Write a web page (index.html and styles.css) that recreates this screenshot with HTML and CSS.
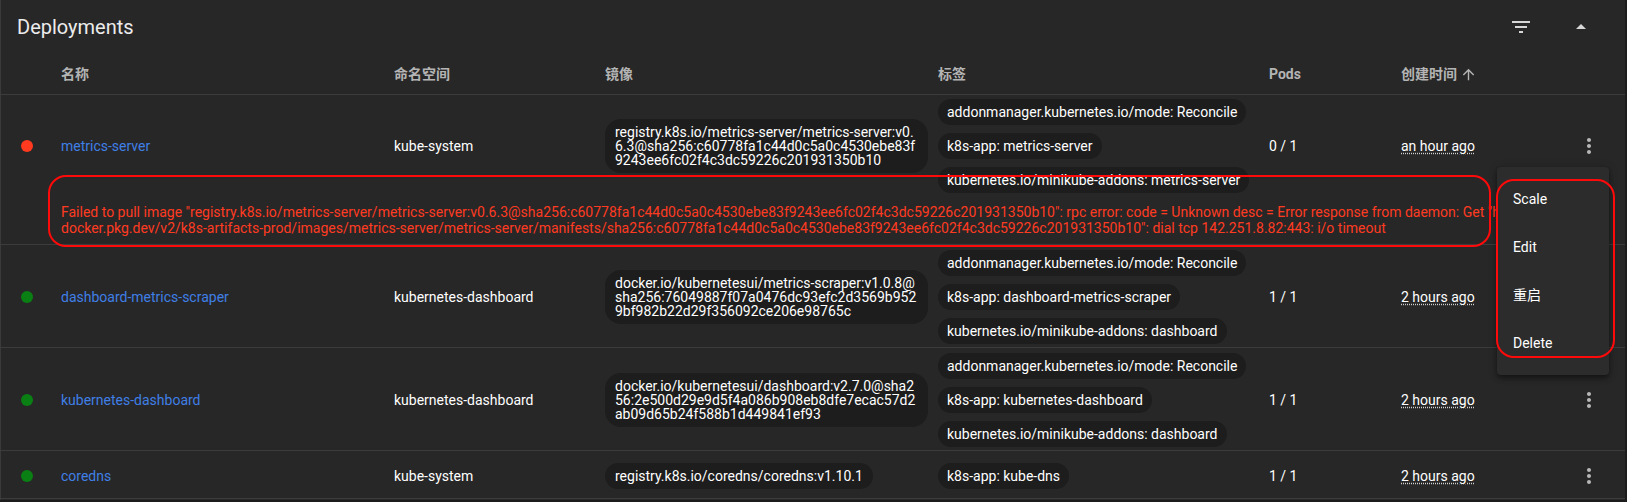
FILE: index.html
```html
<!DOCTYPE html>
<html lang="zh">
<head>
<meta charset="utf-8">
<title>Deployments</title>
<link rel="stylesheet" href="styles.css">
</head>
<body>
<div class="card">
  <div class="titlebar">
    <div class="title">Deployments</div>
    <div class="tools">
      <span class="tool"><svg class="icon" viewBox="0 0 24 24"><path d="M10 18h4v-2h-4v2zM3 6v2h18V6H3zm3 7h12v-2H6v2z"/></svg></span>
      <span class="tool"><svg class="icon" viewBox="0 0 24 24"><path d="M7 14l5-5 5 5z"/></svg></span>
    </div>
  </div>

  <div class="row head">
    <div></div>
    <div>名称</div>
    <div>命名空间</div>
    <div>镜像</div>
    <div>标签</div>
    <div>Pods</div>
    <div class="sort">创建时间<svg class="arrow" viewBox="0 0 24 24"><path d="M4 12l1.41 1.41L11 7.83V20h2V7.83l5.58 5.59L20 12l-8-8-8 8z"/></svg></div>
    <div></div>
  </div>

  <div class="group">
    <div class="row first">
      <div><span class="dot bad"></span></div>
      <div><a class="name">metrics-server</a></div>
      <div class="text">kube-system</div>
      <div><span class="chip img">registry.k8s.io/metrics-server/metrics-server:v0.6.3@sha256:c60778fa1c44d0c5a0c4530ebe83f9243ee6fc02f4c3dc59226c201931350b10</span></div>
      <div class="labels">
        <span class="chip">addonmanager.kubernetes.io/mode: Reconcile</span>
        <span class="chip">k8s-app: metrics-server</span>
        <span class="chip">kubernetes.io/minikube-addons: metrics-server</span>
      </div>
      <div class="text">0 / 1</div>
      <div><span class="age">an hour ago</span></div>
      <div><svg class="kebab" viewBox="0 0 24 24"><path d="M12 8c1.1 0 2-.9 2-2s-.9-2-2-2-2 .9-2 2 .9 2 2 2zm0 2c-1.1 0-2 .9-2 2s.9 2 2 2 2-.9 2-2-.9-2-2-2zm0 6c-1.1 0-2 .9-2 2s.9 2 2 2 2-.9 2-2-.9-2-2-2z"/></svg></div>
    </div>
    <div class="error">
      <div class="line">Failed to pull image "registry.k8s.io/metrics-server/metrics-server:v0.6.3@sha256:c60778fa1c44d0c5a0c4530ebe83f9243ee6fc02f4c3dc59226c201931350b10": rpc error: code = Unknown desc = Error response from daemon: Get "h</div>
      <div class="line">docker.pkg.dev/v2/k8s-artifacts-prod/images/metrics-server/metrics-server/manifests/sha256:c60778fa1c44d0c5a0c4530ebe83f9243ee6fc02f4c3dc59226c201931350b10": dial tcp 142.251.8.82:443: i/o timeout</div>
    </div>
  </div>

  <div class="group">
    <div class="row">
      <div><span class="dot ok"></span></div>
      <div><a class="name">dashboard-metrics-scraper</a></div>
      <div class="text">kubernetes-dashboard</div>
      <div><span class="chip img">docker.io/kubernetesui/metrics-scraper:v1.0.8@sha256:76049887f07a0476dc93efc2d3569b9529bf982b22d29f356092ce206e98765c</span></div>
      <div class="labels">
        <span class="chip">addonmanager.kubernetes.io/mode: Reconcile</span>
        <span class="chip">k8s-app: dashboard-metrics-scraper</span>
        <span class="chip">kubernetes.io/minikube-addons: dashboard</span>
      </div>
      <div class="text">1 / 1</div>
      <div><span class="age">2 hours ago</span></div>
      <div><svg class="kebab" viewBox="0 0 24 24"><path d="M12 8c1.1 0 2-.9 2-2s-.9-2-2-2-2 .9-2 2 .9 2 2 2zm0 2c-1.1 0-2 .9-2 2s.9 2 2 2 2-.9 2-2-.9-2-2-2zm0 6c-1.1 0-2 .9-2 2s.9 2 2 2 2-.9 2-2-.9-2-2-2z"/></svg></div>
    </div>
  </div>

  <div class="group">
    <div class="row">
      <div><span class="dot ok"></span></div>
      <div><a class="name">kubernetes-dashboard</a></div>
      <div class="text">kubernetes-dashboard</div>
      <div><span class="chip img">docker.io/kubernetesui/dashboard:v2.7.0@sha256:2e500d29e9d5f4a086b908eb8dfe7ecac57d2ab09d65b24f588b1d449841ef93</span></div>
      <div class="labels">
        <span class="chip">addonmanager.kubernetes.io/mode: Reconcile</span>
        <span class="chip">k8s-app: kubernetes-dashboard</span>
        <span class="chip">kubernetes.io/minikube-addons: dashboard</span>
      </div>
      <div class="text">1 / 1</div>
      <div><span class="age">2 hours ago</span></div>
      <div><svg class="kebab" viewBox="0 0 24 24"><path d="M12 8c1.1 0 2-.9 2-2s-.9-2-2-2-2 .9-2 2 .9 2 2 2zm0 2c-1.1 0-2 .9-2 2s.9 2 2 2 2-.9 2-2-.9-2-2-2zm0 6c-1.1 0-2 .9-2 2s.9 2 2 2 2-.9 2-2-.9-2-2-2z"/></svg></div>
    </div>
  </div>

  <div class="group">
    <div class="row">
      <div><span class="dot ok"></span></div>
      <div><a class="name">coredns</a></div>
      <div class="text">kube-system</div>
      <div><span class="chip img">registry.k8s.io/coredns/coredns:v1.10.1</span></div>
      <div class="labels">
        <span class="chip">k8s-app: kube-dns</span>
      </div>
      <div class="text">1 / 1</div>
      <div><span class="age">2 hours ago</span></div>
      <div><svg class="kebab" viewBox="0 0 24 24"><path d="M12 8c1.1 0 2-.9 2-2s-.9-2-2-2-2 .9-2 2 .9 2 2 2zm0 2c-1.1 0-2 .9-2 2s.9 2 2 2 2-.9 2-2-.9-2-2-2zm0 6c-1.1 0-2 .9-2 2s.9 2 2 2 2-.9 2-2-.9-2-2-2z"/></svg></div>
    </div>
  </div>

  <div class="menu">
    <div class="item">Scale</div>
    <div class="item">Edit</div>
    <div class="item">重启</div>
    <div class="item">Delete</div>
  </div>

  <div class="mark mark-error"></div>
  <div class="mark mark-menu"></div>
</div>
</body>
</html>
```

FILE: styles.css
```css
* { box-sizing: border-box; }

html, body {
  margin: 0;
  padding: 0;
  background: #1c1c1c;
}

body {
  font-family: Roboto, "Noto Sans CJK SC", sans-serif;
  font-size: 14px;
  color: #ffffff;
  width: 1627px;
  height: 502px;
  overflow: hidden;
}

.card {
  position: relative;
  width: 1625px;
  height: 500px;
  background: #272727;
  box-shadow: inset 1px 0 0 #3a3a3a;
}

.titlebar {
  display: flex;
  align-items: center;
  justify-content: space-between;
  height: 54px;
  padding-left: 17px;
  padding-right: 20px;
}

.title {
  font-size: 20px;
  line-height: 24px;
  color: #ececec;
}

.tools {
  display: flex;
  gap: 12px;
}

.tool {
  display: flex;
  align-items: center;
  justify-content: center;
  width: 48px;
  height: 40px;
}

.icon {
  width: 24px;
  height: 24px;
  fill: #d6d6d6;
}

.row {
  display: grid;
  grid-template-columns: 61px 333px 211px 333px 331px 132px 176px 48px;
  align-items: center;
  min-height: 47px;
  padding: 5px 0 3px;
}

.row.first {
  padding: 4px 0 3px;
}

.row.head {
  height: 41px;
  min-height: 0;
  padding: 0;
  border-bottom: 1px solid #3c3c3c;
  font-weight: 700;
  color: #b4b4b4;
  line-height: 16px;
}

.sort {
  display: flex;
  align-items: center;
  gap: 3px;
}

.arrow {
  width: 17px;
  height: 17px;
  fill: #b4b4b4;
}

.group {
  border-bottom: 1px solid #3c3c3c;
}

.dot {
  display: block;
  width: 12px;
  height: 12px;
  border-radius: 50%;
  margin-left: 21px;
}

.dot.bad { background: #ff3a1e; }
.dot.ok { background: #0a7f14; }

.name {
  color: #3f7fe6;
  text-decoration: none;
  line-height: 16px;
}

.text {
  line-height: 16px;
}

.chip {
  display: inline-block;
  background: #1d1d1d;
  color: #ffffff;
  line-height: 14px;
  padding: 6px 9px;
  border-radius: 13px;
  white-space: nowrap;
}

.chip.img {
  max-width: 323px;
  padding: 6px 10px;
  border-radius: 16px;
  white-space: normal;
  word-break: break-all;
}

.labels {
  display: flex;
  flex-direction: column;
  align-items: flex-start;
  gap: 8px;
}

.age {
  text-decoration: underline dotted #cfcfcf;
  text-underline-offset: 2px;
  line-height: 16px;
}

.kebab {
  display: block;
  width: 24px;
  height: 24px;
  fill: #b8b8b8;
}

.error {
  padding: 8px 0 8px 61px;
  margin-right: 48px;
  color: #ff3b22;
  line-height: 16px;
  overflow: hidden;
}

.error .line {
  white-space: nowrap;
}

.menu {
  position: absolute;
  left: 1497px;
  top: 167px;
  width: 112px;
  padding: 8px 0;
  background: #2c2c2c;
  border-radius: 4px;
  box-shadow: 0 2px 4px -1px rgba(0,0,0,.3), 0 4px 5px 0 rgba(0,0,0,.2), 0 1px 10px 0 rgba(0,0,0,.18);
}

.item {
  height: 48px;
  line-height: 48px;
  padding: 0 16px;
  color: #ffffff;
}

.mark {
  position: absolute;
  border: 2px solid #ff0a0a;
  border-radius: 18px;
  pointer-events: none;
}

.mark-error {
  left: 48px;
  top: 175px;
  width: 1443px;
  height: 72px;
}

.mark-menu {
  left: 1496px;
  top: 179px;
  width: 119px;
  height: 179px;
}
```
